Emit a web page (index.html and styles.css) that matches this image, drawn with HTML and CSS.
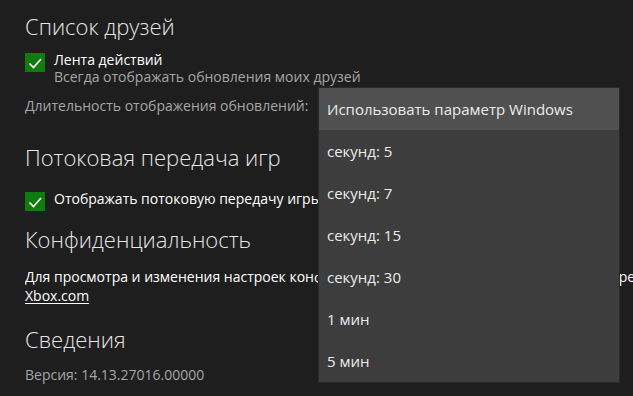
FILE: index.html
```html
<!DOCTYPE html>
<html lang="ru">
<head>
<meta charset="utf-8">
<title>Настройки</title>
<link rel="stylesheet" href="styles.css">
</head>
<body>
<div class="page">
  <h2 class="title">Список друзей</h2>
  <div class="check-row">
    <span class="box"><svg viewBox="0 0 20 20" width="20" height="20"><path d="M4.5 10.5 L8.5 14.5 L16 6" fill="none" stroke="#fff" stroke-width="1.6"/></svg></span>
    <div>
      <div class="label">Лента действий</div>
      <div class="hint">Всегда отображать обновления моих друзей</div>
    </div>
  </div>
  <div class="field">Длительность отображения обновлений:</div>

  <h2 class="title t2">Потоковая передача игр</h2>
  <div class="check-row r2">
    <span class="box"><svg viewBox="0 0 20 20" width="20" height="20"><path d="M4.5 10.5 L8.5 14.5 L16 6" fill="none" stroke="#fff" stroke-width="1.6"/></svg></span>
    <div class="label nowrap">Отображать потоковую передачу игры в ленте действий</div>
  </div>

  <h2 class="title t3">Конфиденциальность</h2>
  <div class="clip">
    <p class="text">Для просмотра и изменения настроек конфиденциальности для сервисов Xbox Live перейдите на сайт</p>
  </div>
  <p class="text"><a class="link" href="#">Xbox.com</a></p>

  <h2 class="title t4">Сведения</h2>
  <p class="field ver">Версия: 14.13.27016.00000</p>
</div>

<ul class="menu">
  <li class="item active">Использовать параметр Windows</li>
  <li class="item">секунд: 5</li>
  <li class="item">секунд: 7</li>
  <li class="item">секунд: 15</li>
  <li class="item">секунд: 30</li>
  <li class="item">1 мин</li>
  <li class="item">5 мин</li>
</ul>
</body>
</html>
```

FILE: styles.css
```css
html, body {
  margin: 0;
  padding: 0;
  background: #1e1e1e;
  overflow: hidden;
  width: 633px;
  height: 396px;
}
body {
  font-family: "Open Sans", "Noto Sans", sans-serif;
  color: #fff;
  position: relative;
}
.page {
  padding: 12px 0 0 25px;
  white-space: nowrap;
  overflow: hidden;
}
.title {
  margin: 0;
  font-size: 22px;
  font-weight: 300;
  line-height: 28px;
  color: #e6e6e6;
}
.t2 { margin-top: 28px; }
.t3 { margin-top: 14px; }
.t4 { margin-top: 20px; }
.check-row {
  display: flex;
  align-items: flex-start;
  gap: 9px;
  margin-top: 11px;
}
.r2 { margin-top: 19px; }
.box {
  width: 20px;
  height: 19px;
  margin-top: 2px;
  background: #107c10;
  display: block;
  flex: none;
}
.box svg { display: block; }
.label {
  font-size: 14px;
  line-height: 17px;
  color: #fff;
}
.hint {
  font-size: 14px;
  line-height: 17px;
  color: #a6a6a6;
}
.field {
  margin: 11px 0 0;
  font-size: 14px;
  line-height: 19px;
  color: #a6a6a6;
}
.text {
  margin: 0;
  font-size: 14px;
  line-height: 19px;
  color: #fff;
}
.clip {
  margin-top: 14px;
  overflow: hidden;
}
.link {
  color: #fff;
  text-decoration: underline;
  text-underline-offset: 2px;
}
.ver { margin-top: 12px; }
.nowrap { white-space: nowrap; }
.menu {
  position: absolute;
  left: 319px;
  top: 88px;
  width: 300px;
  margin: 0;
  padding: 0;
  list-style: none;
  background: #3d3d3d;
  box-shadow: 0 0 0 1px #2a2a2a;
}
.item {
  height: 42px;
  line-height: 42px;
  padding-left: 8px;
  font-size: 15px;
  color: #ececec;
}
.item.active { background: #505050; }
```
